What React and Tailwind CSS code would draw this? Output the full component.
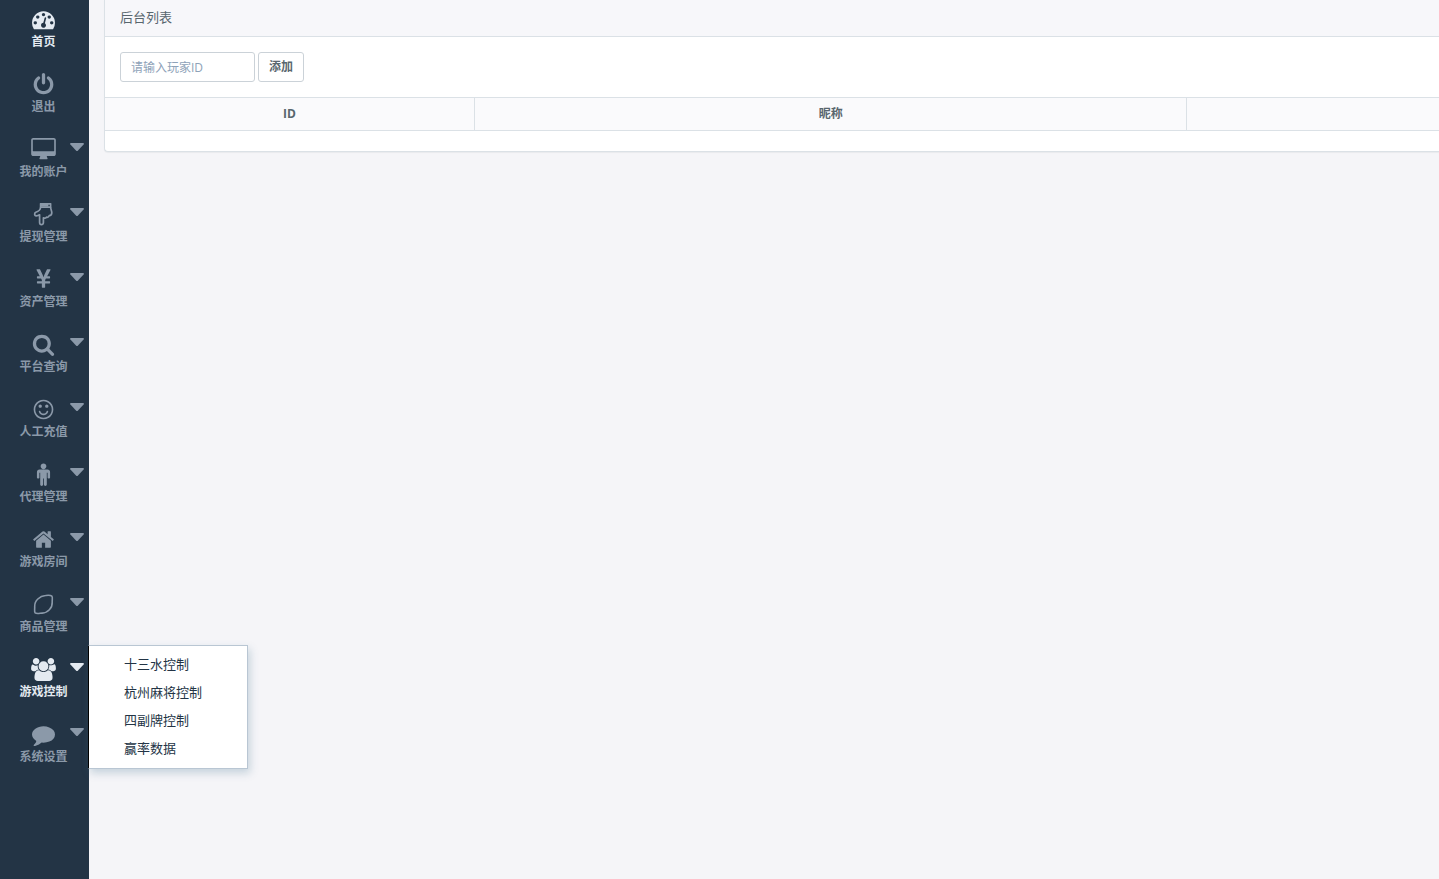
import { FaYenSign } from 'react-icons/fa'

// Solid icons share an 1792-unit em square, only the width differs
const ICONS = {
  dashboard: {
    box: '0 0 1792 1792',
    d: 'M384 1152q0-53-37.5-90.5t-90.5-37.5-90.5 37.5-37.5 90.5 37.5 90.5 90.5 37.5 90.5-37.5 37.5-90.5zm192-448q0-53-37.5-90.5t-90.5-37.5-90.5 37.5-37.5 90.5 37.5 90.5 90.5 37.5 90.5-37.5 37.5-90.5zm428 481l101-382q6-26-7.5-48.5t-38.5-29.5-48 6.5-30 39.5l-101 382q-60 5-107 43.5t-63 98.5q-20 77 20 146t117 89 146-20 89-117q16-60-6-117t-72-91zm660-33q0-53-37.5-90.5t-90.5-37.5-90.5 37.5-37.5 90.5 37.5 90.5 90.5 37.5 90.5-37.5 37.5-90.5zm-640-640q0-53-37.5-90.5t-90.5-37.5-90.5 37.5-37.5 90.5 37.5 90.5 90.5 37.5 90.5-37.5 37.5-90.5zm448 192q0-53-37.5-90.5t-90.5-37.5-90.5 37.5-37.5 90.5 37.5 90.5 90.5 37.5 90.5-37.5 37.5-90.5zm320 448q0 261-141 483-19 29-54 29h-1402q-35 0-54-29-141-221-141-483 0-182 71-348t191-286 286-191 348-71 348 71 286 191 191 286 71 348z',
  },
  power: {
    box: '0 0 1792 1792',
    d: 'M1664 896q0 156-61 298t-164 245-245 164-298 61-298-61-245-164-164-245-61-298q0-182 80.5-343t226.5-270q43-32 95.5-25t83.5 50q32 42 24.5 94.5t-49.5 84.5q-98 74-151.5 181t-53.5 228q0 104 40.5 198.5t109.5 163.5 163.5 109.5 198.5 40.5 198.5-40.5 163.5-109.5 109.5-163.5 40.5-198.5q0-121-53.5-228t-151.5-181q-42-32-49.5-84.5t24.5-94.5q31-43 84-50t95 25q146 109 226.5 270t80.5 343zm-640-768v640q0 52-38 90t-90 38-90-38-38-90v-640q0-52 38-90t90-38 90 38 38 90z',
  },
  desktop: {
    box: '0 0 1792 1792',
    d: 'M1728 992v-832q0-13-9.5-22.5t-22.5-9.5h-1600q-13 0-22.5 9.5t-9.5 22.5v832q0 13 9.5 22.5t22.5 9.5h1600q13 0 22.5-9.5t9.5-22.5zm128-832v1088q0 66-47 113t-113 47h-544q0 37 16 77.5t32 71 16 43.5q0 26-19 45t-45 19h-512q-26 0-45-19t-19-45q0-14 16-44t32-70 16-78h-544q-66 0-113-47t-47-113v-1088q0-66 47-113t113-47h1600q66 0 113 47t47 113z',
  },
  search: {
    box: '0 0 1792 1792',
    d: 'M1216 832q0-185-131.5-316.5t-316.5-131.5-316.5 131.5-131.5 316.5 131.5 316.5 316.5 131.5 316.5-131.5 131.5-316.5zm512 832q0 52-38 90t-90 38q-54 0-90-38l-343-342q-179 124-399 124-143 0-273.5-55.5t-225-150-150-225-55.5-273.5 55.5-273.5 150-225 225-150 273.5-55.5 273.5 55.5 225 150 150 225 55.5 273.5q0 220-124 399l343 343q37 37 37 90z',
  },
  smile: {
    box: '0 0 1792 1792',
    d: 'M1262 1075q-37 121-138 195t-228 74-228-74-138-195q-8-25 4-48.5t38-31.5q25-8 48.5 4t31.5 38q25 80 92.5 129.5t151.5 49.5 151.5-49.5 92.5-129.5q8-26 32-38t49-4 37 31.5 4 48.5zm-494-435q0 53-37.5 90.5t-90.5 37.5-90.5-37.5-37.5-90.5 37.5-90.5 90.5-37.5 90.5 37.5 37.5 90.5zm512 0q0 53-37.5 90.5t-90.5 37.5-90.5-37.5-37.5-90.5 37.5-90.5 90.5-37.5 90.5 37.5 37.5 90.5zm256 256q0-130-51-248.5t-136.5-204-204-136.5-248.5-51-248.5 51-204 136.5-136.5 204-51 248.5 51 248.5 136.5 204 204 136.5 248.5 51 248.5-51 204-136.5 136.5-204 51-248.5zm128 0q0 209-103 385.5t-279.5 279.5-385.5 103-385.5-103-279.5-279.5-103-385.5 103-385.5 279.5-279.5 385.5-103 385.5 103 279.5 279.5 103 385.5z',
  },
  male: {
    box: '-128 0 1792 1792',
    d: 'M1280 704v416q0 40-28 68t-68 28-68-28-28-68v-352h-64v912q0 46-33 79t-79 33-79-33-33-79v-464h-64v464q0 46-33 79t-79 33-79-33-33-79v-912h-64v352q0 40-28 68t-68 28-68-28-28-68v-416q0-80 56-136t136-56h640q80 0 136 56t56 136zm-288-448q0 93-65.5 158.5t-158.5 65.5-158.5-65.5-65.5-158.5 65.5-158.5 158.5-65.5 158.5 65.5 65.5 158.5z',
  },
  home: {
    box: '0 0 1792 1792',
    d: 'M1472 992v480q0 26-19 45t-45 19h-384v-384h-256v384h-384q-26 0-45-19t-19-45v-480q0-1 .5-3t.5-3l575-474 575 474q1 2 1 6zm223-69l-62 74q-8 9-21 11h-3q-13 0-21-7l-692-577-692 577q-12 8-24 7-13-2-21-11l-62-74q-8-10-7-23.5t11-21.5l719-599q32-26 76-26t76 26l244 204v-195q0-14 9-23t23-9h192q14 0 23 9t9 23v408l219 182q10 8 11 21.5t-7 23.5z',
  },
  users: {
    box: '128 0 1792 1792',
    d: 'M657 896q-162 5-265 128h-134q-82 0-138-40.5t-62-118.5q0-353 124-353 6 0 43.5 21t97.5 42.5 119 21.5q67 0 133-23-5 37-5 66 0 159 93 287zm1071 637q0 120-73 189.5t-194 69.5h-874q-121 0-194-69.5t-73-189.5q0-53 3.5-103.5t14-109 26.5-108.5 43-97.5 62-81 85.5-53.5 111.5-20q10 0 43 21.5t73 48 107 48 135 21.5 135-21.5 107-48 73-48 43-21.5q61 0 111.5 20t85.5 53.5 62 81 43 97.5 26.5 108.5 14 109 3.5 103.5zm-1024-1277q0 106-75 181t-181 75-181-75-75-181 75-181 181-75 181 75 75 181zm704 384q0 159-112.5 271.5t-271.5 112.5-271.5-112.5-112.5-271.5 112.5-271.5 271.5-112.5 271.5 112.5 112.5 271.5zm576 225q0 78-62 118.5t-138 40.5h-134q-103-123-265-128 93-128 93-287 0-29-5-66 66 23 133 23 59 0 119-21.5t97.5-42.5 43.5-21q124 0 124 353zm-128-609q0 106-75 181t-181 75-181-75-75-181 75-181 181-75 181 75 75 181z',
  },
  comment: {
    box: '0 0 1792 1792',
    d: 'M1792 896q0 174-120 321.5t-326 233-450 85.5q-70 0-145-8-198 175-460 242-49 14-114 22-17 2-30.5-9t-17.5-29v-1q-3-4-.5-12t2-10 4.5-9.5l6-9 7-8.5 8-9q7-8 31-34.5t34.5-38 31-39.5 32.5-51 27-59 26-76q-157-89-247.5-220t-90.5-281q0-130 71-248.5t191-204.5 286-136.5 348-50.5q244 0 450 85.5t326 233 120 321.5z',
  },
}

const NAV = [
  { label: '首页', icon: 'dashboard', active: true },
  { label: '退出', icon: 'power' },
  { label: '我的账户', icon: 'desktop', sub: true },
  { label: '提现管理', icon: 'hand', sub: true },
  { label: '资产管理', icon: 'yen', sub: true },
  { label: '平台查询', icon: 'search', sub: true },
  { label: '人工充值', icon: 'smile', sub: true },
  { label: '代理管理', icon: 'male', sub: true },
  { label: '游戏房间', icon: 'home', sub: true },
  { label: '商品管理', icon: 'lemon', sub: true },
  {
    label: '游戏控制',
    icon: 'users',
    sub: true,
    active: true,
    items: ['十三水控制', '杭州麻将控制', '四副牌控制', '赢率数据'],
  },
  { label: '系统设置', icon: 'comment', sub: true },
]

function NavIcon({ name }) {
  if (name === 'yen') return <FaYenSign className="h-[21px] w-[23px]" />

  if (name === 'hand') {
    return (
      <svg viewBox="0 0 23 23" className="h-[23px] w-[23px]" fill="none" stroke="currentColor" strokeWidth="1.7" strokeLinejoin="round">
        <path d="M8.6 .8H18.6V4.2H8.6z" />
        <path d="M8.6 .8H16.4V3.6H8.6z" fill="currentColor" stroke="none" />
        <path d="M8.6 4.2C8.4 6.6 6 8.600 3.800 9.300C2.200 9.900 2.200 12.500 4 12.800C5.400 13 6.600 12.400 7.600 11.800V19.600C7.600 22.300 11.400 22.300 11.400 19.600V14.800C12.600 15.400 13.800 15 14.400 14.200C15.800 14.500 16.800 13.800 17.200 12.700C19 12.600 19.800 11.400 19.800 9.700C19.800 7.600 18.700 6.400 18.600 4.200" />
      </svg>
    )
  }

  if (name === 'lemon') {
    return (
      <svg viewBox="0 0 23 23" className="h-[23px] w-[23px]" fill="none" stroke="currentColor" strokeWidth="1.6" strokeLinejoin="round">
        <path d="M13.5 2.5C15.5 2.3 18.4 1.9 19.8 3.1C21 4.6 20 6.7 20.2 9.2C20.6 15 15.5 19.9 10.3 20.1C7.8 20.2 4.8 21.2 3.2 19.9C2 18.5 2.9 16.3 2.7 13.6C2.4 7.6 7.8 2.9 13.5 2.5Z" />
      </svg>
    )
  }

  const icon = ICONS[name]
  return (
    <svg viewBox={icon.box} className="h-[23px] w-[23px] overflow-visible" fill="currentColor">
      <path d={icon.d} />
    </svg>
  )
}

function NavItem({ item }) {
  return (
    <li className="relative">
      <a
        href="#"
        className={`flex h-[65px] flex-col items-center pt-2 pr-[2px] text-xs leading-5 font-bold ${
          item.active ? 'text-[#e4eaf1]' : 'text-[#8b99a9]'
        }`}
      >
        <span className="flex h-6 items-start">
          <NavIcon name={item.icon} />
        </span>
        <span>{item.label}</span>
        {item.sub && (
          <svg viewBox="0 0 14 8" className="absolute top-[13px] right-[5px] h-2 w-[14px]" fill="currentColor">
            <path d="M1 0h12q1.5 .3 .6 1.5L8 7.4q-1 1-2 0L.4 1.5Q-.5 .3 1 0z" />
          </svg>
        )}
      </a>

      {item.items && (
        <ul className="absolute top-[-5px] left-[88px] z-10 w-40 border border-[#b9c6d3] border-l-black bg-white pt-1 pb-[6px] shadow-[2px_4px_8px_rgba(60,110,140,0.25)]">
          {item.items.map((text) => (
            <li key={text}>
              <a href="#" className="block pl-[35px] text-[13px] leading-7 text-[#233445]">
                {text}
              </a>
            </li>
          ))}
        </ul>
      )}
    </li>
  )
}

export default function App() {
  return (
    <div className="flex min-h-screen overflow-hidden bg-[#f5f5f8] font-['Open_Sans','Noto_Sans_CJK_SC',sans-serif] text-[#58666e]">
      <nav className="w-[89px] shrink-0 bg-[#233445]">
        <ul>
          {NAV.map((item) => (
            <NavItem key={item.label} item={item} />
          ))}
        </ul>
      </nav>

      <main className="min-w-0 flex-1 pl-[15px]">
        <section className="rounded-bl border-b border-l border-[#dbe1e6] bg-white shadow-[0_1px_1px_rgba(0,40,40,0.05)]">
          <header className="border-b border-[#dbe1e6] bg-[#f7f7fa] px-[15px] pt-[7px] pb-[9px] text-[13px] leading-5">
            后台列表
          </header>

          <form className="flex gap-[3px] p-[15px]">
            <input
              type="text"
              aria-label="请输入玩家ID"
              placeholder="请输入玩家ID"
              className="h-[30px] w-[135px] rounded-[3px] border border-[#cbd2d8] px-[10px] text-xs placeholder:text-[#8ea2b8] focus:outline-none"
            />
            <button
              type="button"
              className="h-[30px] rounded-[3px] border border-[#cbd2d8] bg-white px-[10px] text-xs font-semibold"
            >
              添加
            </button>
          </form>

          <table className="mb-5 w-full table-fixed border-y border-[#dbe1e6] text-xs">
            <colgroup>
              <col className="w-[27.7%]" />
              <col className="w-[53.4%]" />
              <col />
            </colgroup>
            <thead>
              <tr className="h-[33px] bg-[#fafafc]">
                <th className="border-r border-[#dbe1e6] font-bold">ID</th>
                <th className="border-r border-[#dbe1e6] font-bold">昵称</th>
                <th />
              </tr>
            </thead>
          </table>
        </section>
      </main>
    </div>
  )
}
